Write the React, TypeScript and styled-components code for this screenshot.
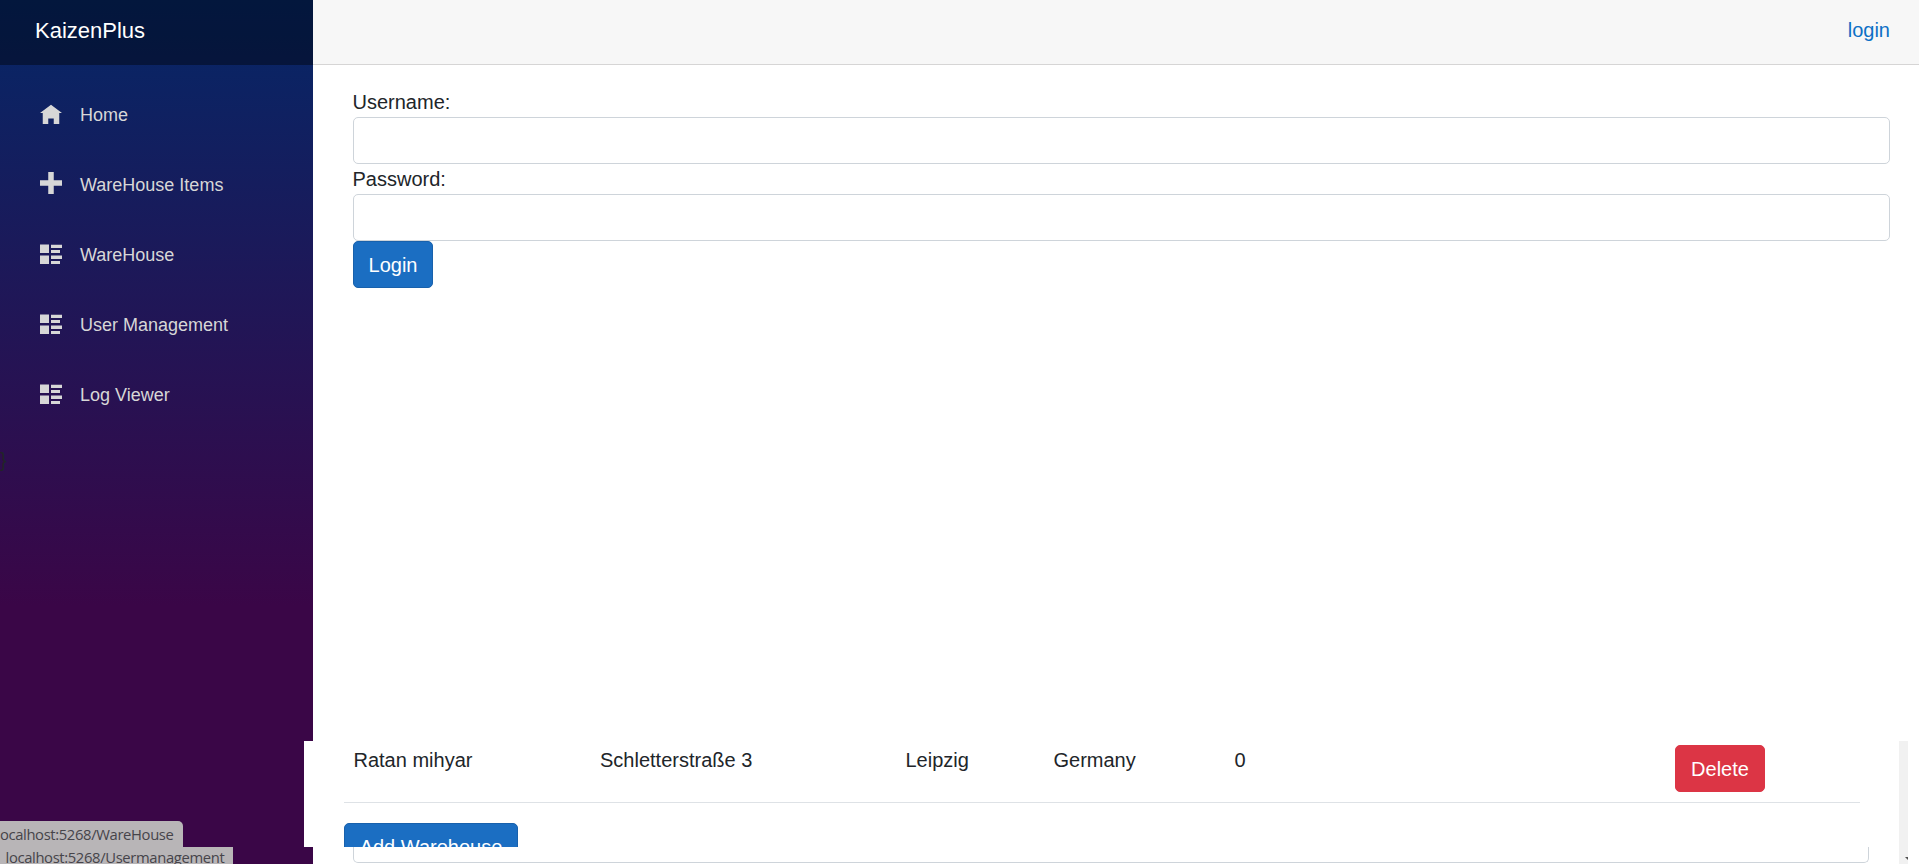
import React from "react";
import styled, { createGlobalStyle } from "styled-components";

const GlobalStyle = createGlobalStyle`
  *, *::before, *::after { box-sizing: border-box; }
  html { font-size: 20px; }
  body {
    margin: 0;
    overflow: hidden;
    background: #fff;
    color: #212529;
    font-family: "Liberation Sans", Arial, sans-serif;
    line-height: 1.5;
  }
`;

const Page = styled.div`
  position: relative;
  display: flex;
  height: 864px;
  overflow: hidden;
`;

const Sidebar = styled.aside`
  flex: 0 0 313px;
  background: linear-gradient(180deg, rgb(5, 39, 103) 0%, #3a0647 70%);
`;

const Brand = styled.div`
  height: 65px;
  padding: 14px 0 0 35px;
  background: rgba(0, 0, 0, 0.4);
  color: #fff;
  font-size: 22px;
  line-height: 33px;
`;

const Nav = styled.nav`
  display: flex;
  flex-direction: column;
  gap: 10px;
  padding: 20px 0;
`;

const NavItem = styled.a`
  display: flex;
  align-items: center;
  height: 60px;
  padding-left: 40px;
  gap: 18px;
  color: #d7d7d7;
  font-size: 18px;
  text-decoration: none;
`;

const NavIcon = styled.svg`
  width: 22px;
  height: 22px;
  margin-bottom: 4px;
  fill: currentColor;
`;

const StrayBrace = styled.div`
  line-height: 30px;
`;

const Main = styled.main`
  flex: 1;
  min-width: 0;
`;

const TopRow = styled.header`
  display: flex;
  justify-content: flex-end;
  height: 65px;
  padding: 15px 29px 0 0;
  background: #f7f7f7;
  border-bottom: 1px solid #d6d5d5;
`;

const TopLink = styled.a`
  color: #0d70c6;
  line-height: 30px;
  text-decoration: none;
`;

const LoginForm = styled.form`
  display: flex;
  flex-direction: column;
  padding: 22px 29px 0 40px;
`;

const Label = styled.label`
  margin-left: -0.5px;
  line-height: 30px;
`;

const TextInput = styled.input`
  height: 47px;
  padding: 7px 15px;
  border: 1px solid #ced4da;
  border-radius: 5px;
  background: #fff;
  font: inherit;
  outline: none;
`;

const tones = {
  primary: { fill: "#1b6ec2", edge: "#1861ac" },
  danger: { fill: "#dc3545", edge: "#dc3545" },
};

const Button = styled.button<{ $tone: keyof typeof tones; $width: number }>`
  width: ${(p) => p.$width}px;
  height: 47px;
  padding: 1px 0 0;
  border: 1px solid ${(p) => tones[p.$tone].edge};
  border-radius: 5px;
  background: ${(p) => tones[p.$tone].fill};
  color: #fff;
  font: inherit;
  white-space: nowrap;
`;

/* Warehouse list window lying over the lower part of the page */
const ListPane = styled.section`
  position: absolute;
  left: 304px;
  right: 20px;
  top: 741px;
  height: 106px;
  padding: 4px 39px 0 40px;
  overflow: hidden;
  background: #fff;
`;

const ListRow = styled.div`
  display: grid;
  grid-template-columns: 246.5px 305.5px 148px 181px 440.5px auto;
  align-items: start;
  justify-content: start;
  height: 58px;
  margin-bottom: 20px;
  padding-left: 9.5px;
  border-bottom: 1px solid #dee2e6;
  line-height: 30px;
`;

/* Lower edge of a further window's text field */
const FieldPane = styled.section`
  position: absolute;
  left: 313px;
  right: 20px;
  bottom: 0;
  height: 17px;
  padding: 0 30px 0 40px;
  background: #fff;
`;

const FieldEdge = styled.div`
  height: 16px;
  border: solid #ced4da;
  border-width: 0 1px 1px;
  border-radius: 0 0 5px 5px;
`;

const ScrollTrack = styled.div`
  position: absolute;
  left: 1899px;
  bottom: 0;
  display: flex;
  align-items: flex-end;
  justify-content: flex-end;
  width: 9px;
  height: 123px;
  padding-bottom: 4px;
  background: #f1f1f1;
`;

const ScrollArrow = styled.svg`
  width: 3px;
  height: 3px;
  fill: #505050;
`;

const StatusBubble = styled.div<{ $top: number; $width: number; $offset: number; $radius: number; $line: number }>`
  position: absolute;
  left: 0;
  top: ${(p) => p.$top}px;
  width: ${(p) => p.$width}px;
  height: 26px;
  overflow: hidden;
  border-radius: 0 ${(p) => p.$radius}px 0 0;
  background: #b8b5b7;
  color: #46444a;
  font-family: "Open Sans", "Noto Sans", sans-serif;
  font-size: 14.8px;
  line-height: ${(p) => p.$line}px;
  letter-spacing: -0.36px;
  text-indent: ${(p) => p.$offset}px;
  white-space: nowrap;
`;

const icons = {
  home: { box: 8, d: "M4 1l-4 3h1v4h2v-2h2v2h2v-4.03l1 .03-4-3z" },
  plus: { box: 8, d: "M3 0v3h-3v2h3v3h2v-3h3v-2h-3v-3h-2z" },
  list: {
    box: 22,
    d: "M0 2.5h9v8.5h-9zM11 2.8h11v3.2h-11zM11 8h9v3h-9zM0 13.5h9v8.5h-9zM11 13.6h11v3.4h-11zM11 19h9v3h-9z",
  },
};

const links: { icon: keyof typeof icons; text: string }[] = [
  { icon: "home", text: "Home" },
  { icon: "plus", text: "WareHouse Items" },
  { icon: "list", text: "WareHouse" },
  { icon: "list", text: "User Management" },
  { icon: "list", text: "Log Viewer" },
];

export default function App() {
  return (
    <Page>
      <GlobalStyle />
      <Sidebar>
        <Brand>KaizenPlus</Brand>
        <Nav>
          {links.map(({ icon, text }) => (
            <NavItem key={text}>
              <NavIcon viewBox={`0 0 ${icons[icon].box} ${icons[icon].box}`}>
                <path d={icons[icon].d} />
              </NavIcon>
              {text}
            </NavItem>
          ))}
        </Nav>
        <StrayBrace>{"}"}</StrayBrace>
      </Sidebar>
      <Main>
        <TopRow>
          <TopLink>login</TopLink>
        </TopRow>
        <LoginForm>
          <Label htmlFor="username">Username:</Label>
          <TextInput id="username" />
          <Label htmlFor="password">Password:</Label>
          <TextInput id="password" type="password" />
          <Button type="button" $tone="primary" $width={80}>
            Login
          </Button>
        </LoginForm>
      </Main>
      <ListPane>
        <ListRow>
          <span>Ratan mihyar</span>
          <span>Schletterstraße 3</span>
          <span>Leipzig</span>
          <span>Germany</span>
          <span>0</span>
          <Button $tone="danger" $width={90}>
            Delete
          </Button>
        </ListRow>
        <Button $tone="primary" $width={174}>
          Add Warehouse
        </Button>
      </ListPane>
      <FieldPane>
        <FieldEdge />
      </FieldPane>
      <ScrollTrack>
        <ScrollArrow viewBox="0 0 3 3">
          <path d="M0 0h3v3z" />
        </ScrollArrow>
      </ScrollTrack>
      <StatusBubble $top={821} $width={183} $offset={-3.5} $radius={5} $line={26}>
        localhost:5268/WareHouse
      </StatusBubble>
      <StatusBubble $top={847} $width={233} $offset={5.5} $radius={0} $line={21}>
        localhost:5268/Usermanagement
      </StatusBubble>
    </Page>
  );
}
